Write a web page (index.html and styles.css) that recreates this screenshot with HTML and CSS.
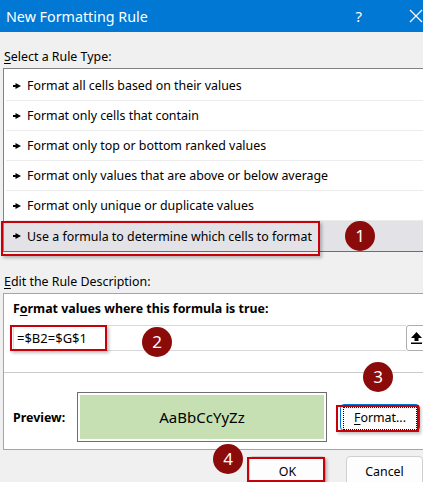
FILE: index.html
```html
<!doctype html>
<html><head>
<meta charset="UTF-8">
<title>New Formatting Rule</title>
<link rel="stylesheet" href="styles.css">
</head>
<body>
<div class="dialog">
  <div class="titlebar">
    <span class="title">New Formatting Rule</span>
    <span class="help">?</span>
    <svg class="close" width="14" height="14" viewBox="0 0 14 14"><path d="M1 1L13 13M13 1L1 13" stroke="#fff" stroke-width="1.2" fill="none"/></svg>
  </div>

  <div class="content">
    <div class="label"><u>S</u>elect a Rule Type:</div>
    <ul class="rule-list">
      <li><svg class="pointer" width="8" height="6" viewBox="0 0 8 6"><path d="M0 2H2.5V0L8 3L2.5 6V4H0Z" fill="#000"/></svg>Format all cells based on their values</li>
      <li><svg class="pointer" width="8" height="6" viewBox="0 0 8 6"><path d="M0 2H2.5V0L8 3L2.5 6V4H0Z" fill="#000"/></svg>Format only cells that contain</li>
      <li><svg class="pointer" width="8" height="6" viewBox="0 0 8 6"><path d="M0 2H2.5V0L8 3L2.5 6V4H0Z" fill="#000"/></svg>Format only top or bottom ranked values</li>
      <li><svg class="pointer" width="8" height="6" viewBox="0 0 8 6"><path d="M0 2H2.5V0L8 3L2.5 6V4H0Z" fill="#000"/></svg>Format only values that are above or below average</li>
      <li><svg class="pointer" width="8" height="6" viewBox="0 0 8 6"><path d="M0 2H2.5V0L8 3L2.5 6V4H0Z" fill="#000"/></svg>Format only unique or duplicate values</li>
      <li class="selected"><svg class="pointer" width="8" height="6" viewBox="0 0 8 6"><path d="M0 2H2.5V0L8 3L2.5 6V4H0Z" fill="#000"/></svg>Use a formula to determine which cells to format</li>
    </ul>

    <div class="label label-desc"><u>E</u>dit the Rule Description:</div>
    <div class="desc-box">
      <div class="formula-area">
        <div class="bold-label">F<u>o</u>rmat values where this formula is true:</div>
        <div class="formula-row">
          <div class="formula-input">=$B2=$G$1</div>
          <div class="collapse-btn">
            <svg width="11" height="12" viewBox="0 0 11 12"><path d="M5.5 0L11 6H7.5V9H3.5V6H0Z" fill="#000"/><rect x="0" y="10.5" width="11" height="1.5" fill="#000"/></svg>
          </div>
        </div>
      </div>
      <div class="preview-row">
        <span class="bold-label">Preview:</span>
        <div class="preview-frame"><div class="preview-fill">AaBbCcYyZz</div></div>
        <button class="btn format-btn"><span class="focus"><u>F</u>ormat...</span></button>
      </div>
    </div>

    <div class="footer">
      <button class="btn ok-btn">OK</button>
      <button class="btn">Cancel</button>
    </div>

    <!-- callouts drawn on top of the dialog -->
    <div class="mark mark-rule"></div>
    <div class="mark mark-formula"></div>
    <div class="mark mark-format"></div>
    <div class="mark mark-ok"></div>
    <span class="step step-1">1</span>
    <span class="step step-2">2</span>
    <span class="step step-3">3</span>
    <span class="step step-4">4</span>
  </div>
</div>
</body>
</html>
```

FILE: styles.css
```css
body {
    margin: 0;
    overflow: hidden;
    background: #f0f0f0;
    font-family: "Noto Sans", "Open Sans", sans-serif;
    font-size: 12.4px;
    color: #000;
}
.dialog {
    width: 445px;
    height: 482px;
}
.titlebar {
    height: 32px;
    background: #0078d4;
    color: #fff;
    display: flex;
    align-items: center;
    padding-left: 6px;
}
.title {
    font-size: 14.3px;
    flex: 1;
}
.help {
    font-size: 15px;
    margin-right: 47px;
}
.close {
    margin-right: 22px;
}
.content {
    position: relative;
    padding: 0 0 0 3px;
}
.label {
    height: 36px;
    line-height: 14px;
    padding: 18px 0 0 1px;
    box-sizing: border-box;
}
.label-desc {
    height: 41px;
    padding-top: 23px;
}
.label u, .bold-label u, .btn u {
    text-decoration-thickness: 1px;
    text-underline-offset: 2px;
}
.rule-list {
    list-style: none;
    margin: 0;
    padding: 2px 0 0 0;
    background: #fff;
    border-top: 1px solid #828282;
    border-left: 1px solid #828282;
    border-bottom: 1px solid #6d6d6d;
}
.rule-list li {
    height: 29px;
    border-bottom: 1px solid #ececec;
    margin-left: 2px;
    display: flex;
    align-items: center;
    padding-left: 7px;
}
.rule-list li.selected {
    border-bottom: none;
    height: 30px;
    margin-left: 0;
    padding-left: 9px;
    background: #e3e3e7;
}
.pointer {
    margin-right: 6px;
}
.desc-box {
    background: #fff;
    border: 1px solid #a5a5a5;
    border-right: none;
    height: 157px;
    box-sizing: border-box;
}
.formula-area {
    padding: 6px 0 0 9px;
    height: 79px;
    box-sizing: border-box;
    border-bottom: 1px solid #cacaca;
}
.bold-label {
    font-weight: bold;
}
.formula-row {
    display: flex;
    margin-top: 8px;
    height: 26px;
}
.formula-input {
    width: 389px;
    border: 1px solid #d9d9d9;
    border-right: none;
    padding-left: 3px;
    line-height: 24px;
    font-size: 13px;
}
.collapse-btn {
    width: 19px;
    border: 1px solid #adadad;
    border-radius: 3px;
    display: flex;
    align-items: center;
    justify-content: center;
}
.preview-row {
    display: flex;
    align-items: center;
    padding: 19px 0 0 9px;
}
.preview-row .bold-label {
    width: 64px;
}
.preview-frame {
    width: 250px;
    height: 50px;
    border: 1px solid #6e6e6e;
    box-sizing: border-box;
    padding: 2px;
}
.preview-fill {
    height: 100%;
    background: #c6e0b4;
    display: flex;
    align-items: center;
    justify-content: center;
    font-size: 15px;
}
.btn {
    font-family: inherit;
    font-size: 12.4px;
    background: #fdfdfd;
    border: 1px solid #d0d0d0;
    border-radius: 4px;
    height: 27px;
    color: #000;
    padding: 0;
}
.format-btn {
    width: 80px;
    margin-left: 13px;
    border-color: #0078d7;
    padding: 2px;
}
.format-btn .focus {
    display: block;
    height: 100%;
    border: 1px dotted #000;
    line-height: 20px;
}
.footer {
    display: flex;
    gap: 20px;
    padding: 6px 0 0 246px;
}
.footer .btn {
    width: 77px;
    height: 30px;
}
.mark {
    position: absolute;
    border: 2px solid #c8000a;
    box-shadow: 2px 2px 3px rgba(0, 0, 0, 0.25);
}
.mark-rule { left: 1px; top: 189px; width: 315px; height: 31px; }
.mark-formula { left: 10px; top: 293px; width: 93px; height: 22px; }
.mark-format { left: 336px; top: 373px; width: 79px; height: 23px; }
.mark-ok { left: 247px; top: 425px; width: 74px; height: 21px; }
.step {
    position: absolute;
    width: 30px;
    height: 30px;
    border-radius: 50%;
    background: #8b0a0a;
    color: #fff;
    font-size: 17px;
    line-height: 30px;
    text-align: center;
}
.step-1 { left: 345px; top: 189px; }
.step-2 { left: 142px; top: 295px; }
.step-3 { left: 363px; top: 330px; }
.step-4 { left: 213px; top: 412px; }
```
